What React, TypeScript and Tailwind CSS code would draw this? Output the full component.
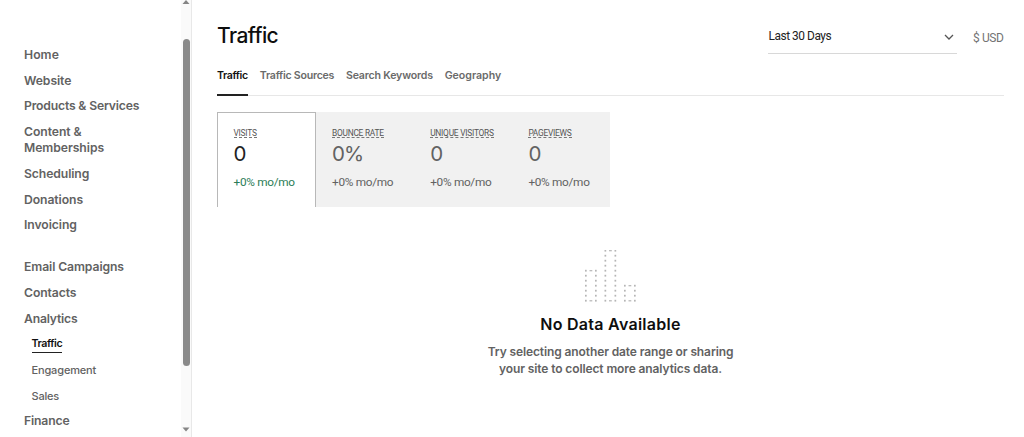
import React from 'react';

const primaryNav = [
  { label: 'Home', style: 'tracking-[0.05px]' },
  { label: 'Website', style: 'tracking-[-0.08px]' },
  { label: 'Products & Services', style: 'tracking-[-0.18px]' },
  { label: 'Content & Memberships', style: 'tracking-[-0.06px] w-[100px]' },
  { label: 'Scheduling', style: 'tracking-[-0.1px]' },
  { label: 'Donations', style: 'tracking-[-0.08px]' },
  { label: 'Invoicing', style: 'tracking-[-0.08px]' },
];

const tabs = [
  { label: 'Traffic', tracking: 'tracking-[-0.38px]' },
  { label: 'Traffic Sources', tracking: 'tracking-[-0.25px]' },
  { label: 'Search Keywords', tracking: 'tracking-[-0.18px]' },
  { label: 'Geography', tracking: 'tracking-[0px]' },
];

const stats = [
  { label: 'VISITS', value: '0' },
  { label: 'BOUNCE RATE', value: '0%' },
  { label: 'UNIQUE VISITORS', value: '0' },
  { label: 'PAGEVIEWS', value: '0' },
];

const bars = [
  { x: 0.8, rows: 7 },
  { x: 20.3, rows: 11 },
  { x: 39.8, rows: 4 },
];

function EmptyChart() {
  return (
    <svg width="52" height="52" viewBox="0 0 52 52" fill="#b5b5b5">
      {bars.map((bar) => {
        const top = 51 - (bar.rows - 1) * 5;
        return (
          <g key={bar.x}>
            {Array.from({ length: bar.rows }, (_, i) => (
              <React.Fragment key={i}>
                <rect x={bar.x - 0.8} y={49.8 - i * 5} width="1.7" height="1.8" />
                <rect x={bar.x + 9.2} y={49.8 - i * 5} width="1.7" height="1.8" />
              </React.Fragment>
            ))}
            <rect x={bar.x + 3.7} y={top - 0.9} width="2.8" height="1.2" />
            <rect x={bar.x + 3.7} y="50.2" width="2.8" height="1.2" />
          </g>
        );
      })}
    </svg>
  );
}

function Sidebar() {
  return (
    <aside className="flex w-[192px] shrink-0 border-r border-[#e8e8e8]">
      <nav className="flex w-[181px] flex-col gap-[9.13px] pl-6 pt-[47px] text-[12.2px] font-semibold leading-[16.5px] tracking-[-0.1px] text-[#626262]">
        {primaryNav.map((item) => (
          <a key={item.label} className={item.style}>{item.label}</a>
        ))}
        <a className="mt-[16.6px]">Email Campaigns</a>
        <a>Contacts</a>
        <a className="tracking-[-0.2px]">Analytics</a>
        <div className="flex flex-col items-start gap-[9.1px] pl-[7.5px] text-[11px] font-medium">
          <a className="-mb-[0.5px] h-[17px] whitespace-nowrap border-b-[1.5px] border-[#222] text-[10.7px] font-semibold tracking-[-0.42px] text-[#111]">Traffic</a>
          <a className="tracking-[-0.15px]">Engagement</a>
          <a className="tracking-[-0.2px]">Sales</a>
        </div>
        <a className="tracking-[-0.15px]">Finance</a>
      </nav>
      <div className="flex w-[10px] flex-col items-center justify-between bg-[#fafafa]">
        <svg width="8" height="5" viewBox="0 0 8 5"><path d="M0.5 4L4 0L7.5 4Z" fill="#858585" /></svg>
        <div className="mb-[61px] mt-[34px] w-[7px] flex-1 rounded-full bg-[#8a8a8a]" />
        <svg className="mb-[5px] shrink-0" width="8" height="5" viewBox="0 0 8 5"><path d="M0.5 0.5L4 4.5L7.5 0.5Z" fill="#858585" /></svg>
      </div>
    </aside>
  );
}

export default function App() {
  return (
    <div className="flex h-[437px] w-[1024px] overflow-hidden bg-white font-['Inter',sans-serif]">
      <Sidebar />
      <main className="flex w-[812px] flex-col pl-[25px]">
        <header className="flex h-[64px] items-start justify-between">
          <h1 className="mt-[22px] text-[21px] font-medium leading-[28px] tracking-[-0.55px] text-[#0e0e0e]">Traffic</h1>
          <div className="flex items-start font-['Roboto',sans-serif] text-[12px]">
            <div className="mt-[20px] flex h-[34px] w-[189px] items-center justify-between border-b border-[#d8d8d8] pl-[0.5px] pr-[3px] pt-px text-[#222]">
              <span className="text-[11.9px] tracking-[-0.45px]">Last 30 Days</span>
              <svg width="10" height="7" viewBox="0 0 10 7" fill="none" stroke="#555" strokeWidth="1.3"><path d="M1 1L5 5L9 1" /></svg>
            </div>
            <span className="ml-[16px] mt-[29.5px] w-[31px] whitespace-nowrap text-[12px] leading-[16px] tracking-[-0.4px] text-[#737373]">$ USD</span>
          </div>
        </header>
        <div className="flex h-[32px] gap-[11.8px] border-b border-[#e7e7e7] text-[10.6px] font-semibold leading-[16px] text-[#6a6a6a]">
          {tabs.map((tab, i) => (
            <button
              key={tab.label}
              className={`${tab.tracking} flex h-[32px] items-start whitespace-nowrap pt-[4px] ${i === 0 ? 'w-[31px] border-b-2 border-[#222] text-[#111]' : ''}`}
            >
              {tab.label}
            </button>
          ))}
        </div>
        <section className="mt-[16px] flex h-[95px] w-[393px] bg-[#f1f1f1] font-['Roboto',sans-serif]">
          {stats.map((stat, i) => (
            <div
              key={stat.label}
              className={`flex h-[95px] shrink-0 flex-col items-start ${i === 0 ? 'w-[99px] border-x border-t border-[#b8b8b8] bg-white pl-[15.5px] pt-[15px] text-[#222]' : 'w-[98.2px] pl-[16px] pt-[16px] text-[#626262]'}`}
            >
              <span className="h-[10px] whitespace-nowrap border-b border-dashed border-[#777] text-[8.4px] leading-[11px] tracking-[-0.25px] text-[#555]">{stat.label}</span>
              <span className="mt-[2px] font-['Inter',sans-serif] text-[20.5px] leading-[28px] tracking-[-0.9px]">{stat.value}</span>
              <span className={`mt-[6px] whitespace-nowrap text-[11.8px] leading-[16px] tracking-[-0.3px] ${i === 0 ? 'text-[#2b7d57]' : ''}`}>+0% mo/mo</span>
            </div>
          ))}
        </section>
        <section className="mt-[43px] flex flex-col items-center">
          <EmptyChart />
          <h2 className="mt-[10px] text-[16px] font-semibold leading-[24px] tracking-[0.27px] text-[#0e0e0e]">No Data Available</h2>
          <p className="mt-[8px] text-center text-[12px] font-semibold leading-[16.5px] tracking-[-0.11px] text-[#626262]">
            Try selecting another date range or sharing<br />your site to collect more analytics data.
          </p>
        </section>
      </main>
    </div>
  );
}
